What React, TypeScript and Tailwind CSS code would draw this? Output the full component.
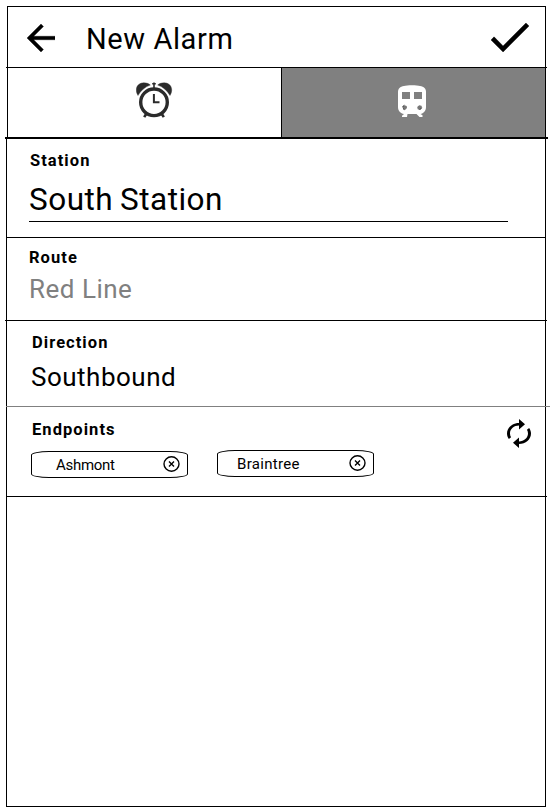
import type { ReactNode } from "react";

function BackIcon() {
  return (
    <svg className="block h-[28px] w-[28px]" viewBox="4 4 16 16">
      <path d="M20 11H7.83l5.59-5.59L12 4l-8 8 8 8 1.41-1.41L7.83 13H20v-2z" stroke="#000" strokeWidth=".2" />
    </svg>
  );
}

function CheckIcon() {
  return (
    <svg className="block h-[29px] w-[38px]" viewBox="3.41 5.59 17.59 13.41" preserveAspectRatio="none">
      <path d="M9 16.17L4.83 12l-1.42 1.41L9 19 21 7l-1.41-1.41z" stroke="#000" strokeWidth=".2" />
    </svg>
  );
}

function AlarmIcon() {
  return (
    <svg className="block h-[36px] w-[37px]" viewBox="0 0 37 36" fill="none" stroke="#2b2b2b">
      <circle cx="18" cy="20.3" r="13.3" strokeWidth="3.4" />
      <path d="M17.9 12v8.2h5.6" strokeWidth="2" />
      <path d="M18 .5v6M16.2 1.800h3.600" strokeWidth="1.6" />
      <path d="M10.5 31.5l-2.3 3.600M25.5 31.5l2.300 3.600" strokeWidth="2.6" />
      <path d="M2 13.500C-2 7 1.500.8 7.800.8c2.800 0 5 .9 6.500 2.200C9.500 4.600 4.800 8.500 2 13.500z" fill="#2b2b2b" strokeWidth=".4" />
      <path d="M34 13.500C38 7 34.500.8 28.200.8c-2.800 0-5 .9-6.500 2.200C26.500 4.600 31.200 8.500 34 13.500z" fill="#2b2b2b" strokeWidth=".4" />
    </svg>
  );
}

function TrainIcon() {
  return (
    <svg className="block h-[32px] w-[28px]" viewBox="0 0 28 32">
      <path
        fill="#fff"
        fillRule="evenodd"
        d="M6 1C9 0 19 0 22 1c4 .8 6 2.500 6 6v15c0 4-2.500 6.500-5.500 7l2 1.300V32h-3l-3-3h-9l-.500 3h-5v-1.200l2-1.800C2.500 28.500 0 26 0 22V7c0-3.500 2-5.200 6-6zM4 7v7h8V7zM16 7v7h8V7z"
      />
      <path d="M4.500 21.500l2-1.300 2.200.8.3 2-2 2-2-1.200zM19.200 22l2-1.800 2.300.5.5 1.800-2 2.500-2.300-.7z" fill="#777" />
      <path d="M4.300 22l2-1.800M6.500 24.700l-1.500-1M21.800 24.800l2-2" stroke="#222" strokeWidth=".8" />
    </svg>
  );
}

function RenewIcon() {
  return (
    <svg className="block h-[29px] w-[24px]" viewBox="4 1 16 22" preserveAspectRatio="none">
      <path d="M12 6v3l4-4-4-4v3c-4.420 0-8 3.580-8 8 0 1.570.46 3.030 1.240 4.260L6.700 14.800A5.870 5.870 0 0 1 6 12c0-3.310 2.690-6 6-6zm6.760 1.740L17.300 9.200c.44.84.7 1.790.7 2.800 0 3.310-2.690 6-6 6v-3l-4 4 4 4v-3c4.420 0 8-3.580 8-8 0-1.570-.46-3.030-1.240-4.260z" />
    </svg>
  );
}

function RemoveIcon() {
  return (
    <svg className="block h-[16px] w-[17px]" viewBox="0 0 17 16" fill="none" stroke="#000">
      <ellipse cx="8.500" cy="8" rx="7.500" ry="7.200" strokeWidth="1.400" />
      <path d="M6 5.500l5 5M11 5.500l-5 5" strokeWidth="1.400" />
    </svg>
  );
}

function Label({ children }: { children: ReactNode }) {
  return <div className="text-[16.5px] leading-[20px] font-bold tracking-[1.05px]">{children}</div>;
}

function Divider({ className }: { className: string }) {
  return <div className={`h-px shrink-0 ${className}`} />;
}

export default function App() {
  return (
    <div className="flex h-[811px] w-[552px] flex-col overflow-hidden bg-white pt-[6px] font-['Roboto','Liberation_Sans',sans-serif] whitespace-nowrap text-black">
      <header className="ml-[7px] flex h-[61px] w-[539px] shrink-0 items-start border-x border-t border-black">
        <div className="mt-[17px] ml-[19px]">
          <BackIcon />
        </div>
        <h1 className="mt-[14px] ml-[31px] text-[29px] leading-[36px] tracking-[0.6px]">New Alarm</h1>
        <div className="mt-[16px] mr-[16px] ml-auto">
          <CheckIcon />
        </div>
      </header>
      <Divider className="ml-[6px] w-[541px] bg-black" />
      <nav className="ml-[7px] flex h-[69px] w-[539px] shrink-0 border-x border-black">
        <div className="w-[273px] pt-[14px] pl-[128px]">
          <AlarmIcon />
        </div>
        <div className="flex-1 border-l border-black bg-[#808080] pt-[17px] pl-[116px]">
          <TrainIcon />
        </div>
      </nav>
      <div className="ml-[5px] h-[2px] w-[543px] shrink-0 bg-black" />
      <main className="ml-[6px] flex h-[668px] w-[540px] shrink-0 flex-col border-x border-b border-black">
        <section className="h-[98px] pt-[12px] pl-[23px]">
          <Label>Station</Label>
          <div className="mt-[8px] -ml-px h-[43px] w-[479px] border-b border-black text-[31.5px] leading-[41px] tracking-[0.5px] [word-spacing:-1.5px]">
            South Station
          </div>
        </section>
        <Divider className="bg-black" />
        <section className="h-[82px] pt-[10px] pl-[22px]">
          <Label>Route</Label>
          <div className="mt-[5px] text-[26px] leading-[32px] tracking-[0.5px] text-[#808080]">Red Line</div>
        </section>
        <Divider className="-mx-[2px] bg-black" />
        <section className="h-[85px] pt-[12px] pl-[25px]">
          <Label>Direction</Label>
          <div className="mt-[8px] -ml-px text-[26px] leading-[32px] tracking-[0.5px]">Southbound</div>
        </section>
        <Divider className="-mr-[5px] -ml-px bg-[#808080]" />
        <section className="flex h-[89px] items-start">
          <div className="pt-[13px] pl-[24px]">
            <div className="pl-px">
              <Label>Endpoints</Label>
            </div>
            <div className="mt-[10px] flex gap-[29px] text-[15px]">
              <div className="mt-px flex h-[27px] w-[157px] items-start justify-between rounded-[18px/4px] border border-black pr-[7px] pl-[24px]">
                <span className="mt-[3px] leading-[20px] tracking-[-0.3px]">Ashmont</span>
                <div className="mt-[4px]">
                  <RemoveIcon />
                </div>
              </div>
              <div className="flex h-[27px] w-[157px] items-start justify-between rounded-[18px/4px] border border-black pr-[7px] pl-[19px]">
                <span className="mt-[3px] leading-[20px] tracking-[0.3px]">Braintree</span>
                <div className="mt-[4px]">
                  <RemoveIcon />
                </div>
              </div>
            </div>
          </div>
          <div className="mt-[12px] mr-[14px] ml-auto">
            <RenewIcon />
          </div>
        </section>
        <Divider className="-mr-[2px] bg-black" />
      </main>
    </div>
  );
}
